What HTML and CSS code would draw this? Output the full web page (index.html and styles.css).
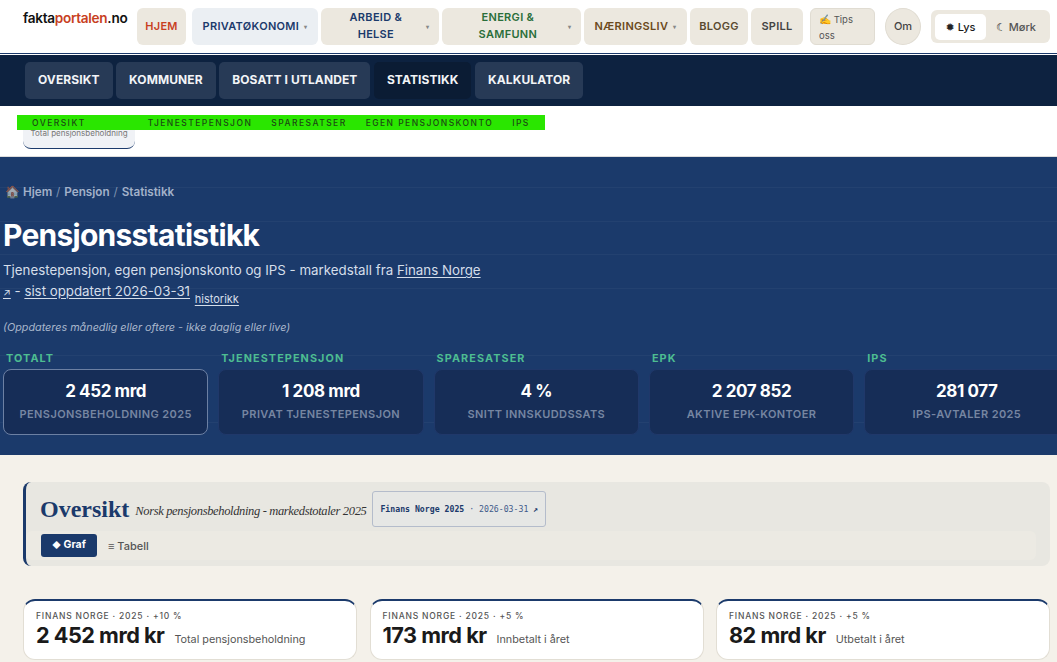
FILE: index.html
```html
<!DOCTYPE html>
<html lang="no">
<head>
<meta charset="UTF-8" />
<meta name="viewport" content="width=device-width, initial-scale=1" />
<title>Pensjonsstatistikk - faktaportalen.no</title>
<link rel="stylesheet" href="styles.css">
</head>
<body>

<!-- Top menu -->
<header class="topbar">
  <a class="logo" href="#">fakta<span>portalen</span>.no</a>
  <nav class="menu">
    <a class="item c-red w-hjem" href="#">HJEM</a>
    <a class="item c-navy w-priv active" href="#">PRIVATØKONOMI <i>▾</i></a>
    <a class="item c-navy w-arbeid" href="#"><b>ARBEID &amp; HELSE</b> <i>▾</i></a>
    <a class="item c-green w-energi" href="#"><b>ENERGI &amp; SAMFUNN</b> <i>▾</i></a>
    <a class="item c-brown w-naering" href="#">NÆRINGSLIV <i>▾</i></a>
    <a class="item c-blogg w-blogg" href="#">BLOGG</a>
    <a class="item c-grey w-spill" href="#">SPILL</a>
    <a class="tips" href="#"><span class="emoji">✍️</span> Tips oss</a>
    <a class="om" href="#">Om</a>
    <div class="theme">
      <span class="theme-on"><em>✹</em> Lys</span>
      <span class="theme-off"><em>☾</em> Mørk</span>
    </div>
  </nav>
</header>

<!-- Section tabs -->
<nav class="tabs">
  <a href="#">OVERSIKT</a>
  <a href="#">KOMMUNER</a>
  <a href="#">BOSATT I UTLANDET</a>
  <a class="current" href="#">STATISTIKK</a>
  <a href="#">KALKULATOR</a>
</nav>

<!-- Jump links, the green bar lies over the small card -->
<div class="jump">
  <div class="mini-card">Total pensjonsbeholdning</div>
  <div class="jump-bar">
    <a href="#">OVERSIKT</a>
    <a href="#">TJENESTEPENSJON</a>
    <a href="#">SPARESATSER</a>
    <a href="#">EGEN PENSJONSKONTO</a>
    <a href="#">IPS</a>
  </div>
</div>

<section class="hero">
  <div class="crumbs"><span class="emoji">🏠</span> Hjem <s>/</s> Pensjon <s>/</s> Statistikk</div>
  <h1>Pensjonsstatistikk</h1>
  <p class="lead">Tjenestepensjon, egen pensjonskonto og IPS - markedstall fra <a href="#">Finans Norge <span class="arrow">↗</span></a> - <a href="#">sist oppdatert 2026-03-31</a> <a class="small" href="#">historikk</a></p>
  <p class="note">(Oppdateres månedlig eller oftere - ikke daglig eller live)</p>

  <div class="stats">
    <div class="stat selected">
      <h5>TOTALT</h5>
      <div class="box"><strong>2 452 mrd</strong><span>PENSJONSBEHOLDNING 2025</span></div>
    </div>
    <div class="stat">
      <h5>TJENESTEPENSJON</h5>
      <div class="box"><strong>1 208 mrd</strong><span>PRIVAT TJENESTEPENSJON</span></div>
    </div>
    <div class="stat">
      <h5>SPARESATSER</h5>
      <div class="box"><strong>4 %</strong><span>SNITT INNSKUDDSSATS</span></div>
    </div>
    <div class="stat">
      <h5>EPK</h5>
      <div class="box"><strong>2 207 852</strong><span>AKTIVE EPK-KONTOER</span></div>
    </div>
    <div class="stat">
      <h5>IPS</h5>
      <div class="box"><strong>281 077</strong><span>IPS-AVTALER 2025</span></div>
    </div>
  </div>
</section>

<main class="content">
  <div class="panel">
    <div class="panel-head">
      <h2>Oversikt</h2>
      <span class="panel-sub">Norsk pensjonsbeholdning - markedstotaler 2025</span>
      <a class="source" href="#"><b>Finans Norge 2025</b> · 2026-03-31 <b>↗</b></a>
    </div>
    <div class="views">
      <a class="view-on" href="#"><small>◆</small> Graf</a>
      <a class="view-off" href="#">≡ Tabell</a>
    </div>
  </div>

  <div class="cards">
    <div class="card">
      <div class="card-top">FINANS NORGE · 2025 · +10 %</div>
      <div class="card-row"><strong>2 452 mrd kr</strong><span>Total pensjonsbeholdning</span></div>
    </div>
    <div class="card">
      <div class="card-top">FINANS NORGE · 2025 · +5 %</div>
      <div class="card-row"><strong>173 mrd kr</strong><span>Innbetalt i året</span></div>
    </div>
    <div class="card">
      <div class="card-top">FINANS NORGE · 2025 · +5 %</div>
      <div class="card-row"><strong>82 mrd kr</strong><span>Utbetalt i året</span></div>
    </div>
  </div>
</main>

</body>
</html>
```

FILE: styles.css
```css
html, body {
  margin: 0;
  padding: 0;
}
body {
  font-family: Inter, 'Noto Sans', sans-serif;
  background: #f4f1ea;
  color: #1a1a1a;
  height: 662px;
  overflow: hidden;
}
a {
  color: inherit;
  text-decoration: none;
}

/* Top menu */
.topbar {
  display: flex;
  height: 54px;
  background: #fff;
  padding-left: 23px;
  box-sizing: border-box;
  border-bottom: 1px solid #1b3a6b;
}
.logo {
  width: 114px;
  flex: none;
  font-size: 13.6px;
  font-weight: 600;
  letter-spacing: -0.3px;
  line-height: 16px;
  padding-top: 10px;
  color: #111;
}
.logo span {
  color: #c8401f;
}
.menu {
  display: flex;
  align-items: flex-start;
  padding-top: 8px;
}
.item {
  display: flex;
  align-items: center;
  justify-content: center;
  box-sizing: border-box;
  height: 37px;
  background: #ece8df;
  border-radius: 6px;
  font-size: 11px;
  font-weight: 600;
  letter-spacing: 0.3px;
  line-height: 17px;
  text-align: center;
  margin-right: 3px;
}
.item b {
  font-weight: 600;
  flex: 1;
  margin-top: -1px;
}
.item i {
  font-style: normal;
  font-size: 6px;
  color: #888;
  margin-left: 5px;
}
.w-hjem { width: 49px; }
.w-priv { width: 126px; margin-left: 3px; }
.w-arbeid { width: 118px; padding: 0 10px; }
.w-energi { width: 139px; padding: 0 10px 0 11px; }
.w-naering { width: 103px; }
.w-blogg { width: 58px; }
.w-spill { width: 52px; margin-right: 7px; }
.active { background: #ebeff3; }
.c-red { color: #c8401f; }
.c-navy { color: #1b3a6b; }
.c-green { color: #2a6e3a; }
.c-brown { color: #6b4a20; }
.c-blogg { color: #5a4a30; }
.c-grey { color: #444; }
.tips {
  box-sizing: border-box;
  width: 65px;
  height: 37px;
  padding: 2px 8px;
  background: #ece8df;
  border: 1px solid #e0dcd2;
  border-radius: 6px;
  font-size: 9.5px;
  line-height: 16px;
  color: #555;
  margin-right: 10px;
}
.tips .emoji {
  font-size: 10px;
}
.crumbs .emoji {
  font-size: 12px;
  opacity: 0.6;
}
.om {
  box-sizing: border-box;
  width: 36px;
  height: 37px;
  line-height: 35px;
  text-align: center;
  background: #ece8df;
  border: 1px solid #e0dcd2;
  border-radius: 50%;
  font-size: 11px;
  font-weight: 500;
  color: #444;
  margin-right: 10px;
}
.theme {
  display: flex;
  align-items: center;
  box-sizing: border-box;
  width: 119px;
  height: 33px;
  margin-top: 2px;
  padding: 4px;
  background: #ece8df;
  border-radius: 6px;
  font-size: 11px;
  font-weight: 500;
}
.theme-on {
  width: 51px;
  height: 26px;
  line-height: 26px;
  text-align: center;
  background: #fff;
  border-radius: 5px;
  color: #1a1a1a;
}
.theme-off {
  flex: 1;
  text-align: center;
  color: #555;
}
.theme em {
  font-style: normal;
  font-family: 'DejaVu Sans', sans-serif;
  font-size: 11px;
  font-weight: 700;
  color: #222;
}

/* Section tabs */
.tabs {
  display: flex;
  gap: 3.5px;
  height: 52px;
  box-sizing: border-box;
  padding: 7px 0 0 25px;
  background: #0d2240;
  border-top: 1px solid #fff;
}
.tabs a {
  height: 37px;
  box-sizing: border-box;
  padding: 0 13px;
  line-height: 36px;
  background: #273a56;
  border-radius: 5px;
  color: #f2f4f7;
  font-size: 12px;
  font-weight: 700;
  letter-spacing: 0.1px;
}
.tabs a.current {
  background: #0b1c34;
}

/* Jump links */
.jump {
  position: relative;
  height: 51px;
  box-sizing: border-box;
  background: #fff;
  border-bottom: 1px solid #ddd;
}
.mini-card {
  box-sizing: border-box;
  width: 112px;
  height: 34px;
  margin-left: 23px;
  position: relative;
  top: 9px;
  padding-top: 13px;
  background: #f0f2f6;
  border-bottom: 1px solid #1b3a6b;
  border-radius: 8px;
  font-size: 8px;
  color: #777;
  text-align: center;
  white-space: nowrap;
}
.jump-bar {
  position: absolute;
  left: 17px;
  top: 9px;
  box-sizing: border-box;
  width: 528px;
  height: 15px;
  padding-left: 15px;
  display: flex;
  background: #2ae600;
  font-size: 8.5px;
  font-weight: 500;
  letter-spacing: 1.45px;
  line-height: 16px;
  color: #1c4a14;
  white-space: nowrap;
}
.jump-bar a {
  margin-right: 19px;
}
.jump-bar a:first-child {
  margin-right: 62px;
}

/* Hero */
.hero {
  box-sizing: border-box;
  height: 298px;
  padding: 28px 0 0 3px;
  background-color: #1b3a6b;
  background-image: repeating-linear-gradient(180deg, transparent 0, transparent 32.5px, rgba(255,255,255,0.035) 32.5px, rgba(255,255,255,0.035) 33.5px);
  background-position: 0 -2px;
  color: #fff;
  overflow: hidden;
}
.crumbs {
  font-size: 11.7px;
  font-weight: 600;
  line-height: 14px;
  color: #a2b1c9;
  padding-left: 2px;
}
.crumbs s {
  text-decoration: none;
  font-weight: 400;
  margin: 0 1px;
  color: #7f93b0;
}
h1 {
  margin: 18px 0 0;
  font-size: 30px;
  font-weight: 700;
  letter-spacing: -0.75px;
  line-height: 36px;
}
.lead {
  margin: 7px 0 0;
  width: 485px;
  font-size: 13.3px;
  line-height: 21px;
  color: #d5deea;
}
.lead a {
  text-decoration: underline;
  text-underline-offset: 2px;
}
.lead .arrow {
  font-size: 10px;
}
.lead .small {
  font-size: 11px;
  margin-left: 1px;
  position: relative;
  top: 7px;
}
.note {
  margin: 18px 0 0;
  font-size: 10.8px;
  font-style: italic;
  line-height: 14px;
  color: #a9b7cc;
}
.stats {
  display: grid;
  grid-template-columns: repeat(5, 205.3px);
  gap: 10px;
  margin-top: 17px;
}
.stat h5 {
  margin: 0 0 3px 3px;
  font-size: 10.8px;
  font-weight: 700;
  letter-spacing: 1.1px;
  line-height: 14px;
  color: #4dbd91;
}
.box {
  box-sizing: border-box;
  height: 66px;
  padding-top: 11px;
  background: #162d57;
  border: 1px solid #20386a;
  border-radius: 8px;
  text-align: center;
}
.selected .box {
  border-color: #6c80a3;
}
.box strong {
  display: block;
  font-size: 17px;
  font-weight: 700;
  letter-spacing: -0.4px;
  line-height: 20px;
}
.box span {
  display: block;
  margin-top: 6px;
  font-size: 11px;
  font-weight: 600;
  letter-spacing: 0.4px;
  line-height: 14px;
  color: #7686a2;
}

/* Content */
.content {
  padding: 27px 7px 0 23px;
}
.panel {
  box-sizing: border-box;
  height: 84px;
  background: #e8e7e1;
  border-left: 3px solid #1b3a6b;
  border-radius: 8px;
  padding: 9px 14px 0 14px;
}
.panel-head {
  display: flex;
  align-items: center;
  height: 36px;
}
h2 {
  margin: 0;
  font-family: 'Liberation Serif', serif;
  font-size: 24px;
  font-weight: 700;
  color: #1b3a6b;
}
.panel-sub {
  margin-left: 6px;
  font-family: 'Liberation Serif', serif;
  font-size: 12.5px;
  font-style: italic;
  letter-spacing: -0.35px;
  color: #333;
  padding-top: 4px;
}
.source {
  box-sizing: border-box;
  height: 36px;
  margin-left: 6px;
  padding: 0 7px;
  line-height: 35px;
  background: #e6e7e5;
  border: 1px solid #b4bccb;
  border-radius: 3px;
  font-family: 'DejaVu Sans Mono', monospace;
  font-size: 8.2px;
  color: #3d5a8a;
}
.source b {
  color: #1b3a6b;
  font-weight: 700;
}
.views {
  display: flex;
  align-items: center;
  gap: 11px;
  height: 29px;
  margin: 4px 0 0 -14px;
  padding-left: 15px;
  background: #eceae3;
  border-radius: 6px;
}
.view-on {
  box-sizing: border-box;
  width: 56px;
  height: 23px;
  line-height: 22px;
  text-align: center;
  background: #1b3a6b;
  border-radius: 3px;
  color: #fff;
  font-size: 10.5px;
  font-weight: 700;
}
.view-on small {
  font-size: 8.5px;
}
.view-off {
  font-size: 11px;
  font-weight: 500;
  color: #555;
}
.cards {
  display: grid;
  grid-template-columns: repeat(3, 334px);
  gap: 12.5px;
  margin-top: 33px;
}
.card {
  box-sizing: border-box;
  height: 61px;
  padding: 9px 12px 0;
  background: #fff;
  border: 1px solid #e2ded4;
  border-top: 2px solid #1b3a6b;
  border-radius: 12px;
}
.card-top {
  font-size: 8.5px;
  font-weight: 500;
  letter-spacing: 0.8px;
  line-height: 12px;
  color: #555;
}
.card-row {
  display: flex;
  align-items: baseline;
  gap: 10px;
  line-height: 27px;
}
.card-row strong {
  font-size: 21.7px;
  font-weight: 700;
  letter-spacing: -0.5px;
}
.card-row span {
  font-size: 10.8px;
  color: #555;
}
```
